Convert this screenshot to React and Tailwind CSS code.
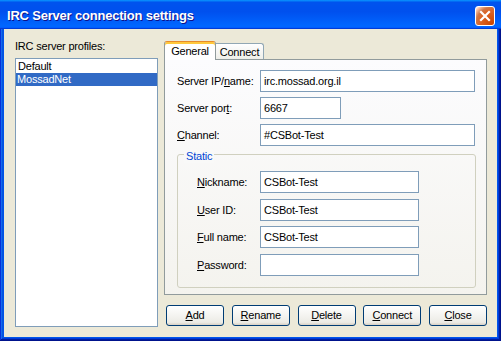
import React from "react";

function Input({ w, children }) {
  return (
    <div
      className={`${w} h-[22px] border border-[#7F9DB9] bg-white pl-[3px] flex items-center text-black`}
    >
      {children}
    </div>
  );
}

function Btn({ children }) {
  return (
    <div className="w-[58px] h-[21px] rounded-[3px] border border-[#003C74] bg-[linear-gradient(180deg,#ffffff,#ecebe5_86%,#d8d0c4)] flex items-center justify-center text-black">
      {children}
    </div>
  );
}

export default function App() {
  return (
    <div className="w-[501px] h-[341px] flex flex-col bg-[#0055EA] shadow-[inset_-1px_-1px_#00138c,inset_1px_1px_#0831d9,inset_-2px_-2px_#001ea0,inset_2px_2px_#166aee,inset_-3px_-3px_#003bda,inset_3px_3px_#0855dd] font-[Liberation_Sans,Arial,sans-serif] text-[11px] leading-[13px] text-black overflow-hidden">
      {/* Title bar */}
      <div className="h-[29px] shrink-0 flex items-start justify-between pl-[7px] pr-[6px] bg-[linear-gradient(180deg,#0997ff,#0053ee_8%,#0050ee_40%,#0066ff_88%,#0066ff_93%,#005bff_95%,#003dd7_96%,#003dd7)]">
        <div className="mt-[8px] text-white font-bold text-[13px] leading-[15px] [text-shadow:1px_1px_#0f1089] tracking-[-0.2px]">
          IRC Server connection settings
        </div>
        <div className="mt-[6px] w-[20px] h-[20px] rounded-[3px] border border-white bg-[radial-gradient(circle_at_90%_90%,#cc4600_0%,#dc6527_55%,#cd7546_70%,#ffccb2_90%,#ffffff_100%)] flex items-center justify-center">
          <svg width="12" height="12" viewBox="0 0 12 12">
            <path d="M2 2 L10 10 M10 2 L2 10" stroke="white" strokeWidth="2.2" strokeLinecap="square" />
          </svg>
        </div>
      </div>

      {/* Body */}
      <div className="flex-1 mx-[4px] mb-[4px] bg-[#ECE9D8] flex pl-[11px] pr-[10px] pt-[11px] pb-[10px] gap-[6px] tracking-[-0.2px]">
        {/* Left column */}
        <div className="w-[143px] flex flex-col">
          <div>IRC server profiles:</div>
          <div className="mt-[5px] flex-1 border border-[#7F9DB9] bg-white pt-[1px]">
            <div className="h-[13px] pl-[2px]">Default</div>
            <div className="h-[13px] pl-[1px] bg-[#316AC5] text-white">MossadNet</div>
          </div>
        </div>

        {/* Right column */}
        <div className="w-[323px] flex flex-col pt-[1px]">
          {/* Tabs */}
          <div className="h-[18px] flex items-end">
            <div className="relative z-10 -mb-px w-[52px] h-[19px] bg-white border-x border-[#919B9C] rounded-t-[3px] border-t border-t-[#E68B2C] shadow-[inset_0_2px_#ffc83c] flex items-center justify-center pt-[1px]">
              General
            </div>
            <div className="w-[48px] h-[16px] border-t border-r border-[#91A7B4] rounded-tr-[3px] bg-[linear-gradient(180deg,#ffffff,#fafaf9_26%,#f0f0ea_95%,#ecebe6)] flex items-center justify-center pt-[2px]">
              Connect
            </div>
          </div>

          {/* Panel */}
          <div className="h-[236px] border border-[#919B9C] bg-[linear-gradient(180deg,#fcfcfe,#f4f3ee)] pl-[12px] pt-[10px] flex flex-col">
            <div className="flex items-center">
              <div className="w-[83px]">
                Server IP/<span className="underline">n</span>ame:
              </div>
              <Input w="w-[215px]">irc.mossad.org.il</Input>
            </div>
            <div className="flex items-center mt-[5px]">
              <div className="w-[83px]">
                Server por<span className="underline">t</span>:
              </div>
              <Input w="w-[81px]">6667</Input>
            </div>
            <div className="flex items-center mt-[5px]">
              <div className="w-[83px]">
                <span className="underline">C</span>hannel:
              </div>
              <Input w="w-[215px]">#CSBot-Test</Input>
            </div>

            {/* Static group */}
            <div className="relative mt-[8px] w-[299px] h-[134px] border border-[#D0D0BF] rounded-[3px] pl-[19px] pt-[16px] flex flex-col">
              <div className="absolute top-[-5px] left-[6px] px-[2px] bg-[#F9F9F8] text-[#0046D5]">
                Static
              </div>
              <div className="flex items-center">
                <div className="w-[63px]">
                  <span className="underline">N</span>ickname:
                </div>
                <Input w="w-[159px]">CSBot-Test</Input>
              </div>
              <div className="flex items-center mt-[6px]">
                <div className="w-[63px]">
                  <span className="underline">U</span>ser ID:
                </div>
                <Input w="w-[159px]">CSBot-Test</Input>
              </div>
              <div className="flex items-center mt-[5px]">
                <div className="w-[63px]">
                  <span className="underline">F</span>ull name:
                </div>
                <Input w="w-[159px]">CSBot-Test</Input>
              </div>
              <div className="flex items-center mt-[6px]">
                <div className="w-[63px]">
                  <span className="underline">P</span>assword:
                </div>
                <Input w="w-[159px]"></Input>
              </div>
            </div>
          </div>

          {/* Buttons */}
          <div className="mt-[10px] pl-[2px] flex justify-between">
            <Btn>
              <span className="underline">A</span>dd
            </Btn>
            <Btn>
              <span className="underline">R</span>ename
            </Btn>
            <Btn>
              <span className="underline">D</span>elete
            </Btn>
            <Btn>
              <span className="underline">C</span>onnect
            </Btn>
            <Btn>
              <span className="underline">C</span>lose
            </Btn>
          </div>
        </div>
      </div>
    </div>
  );
}
